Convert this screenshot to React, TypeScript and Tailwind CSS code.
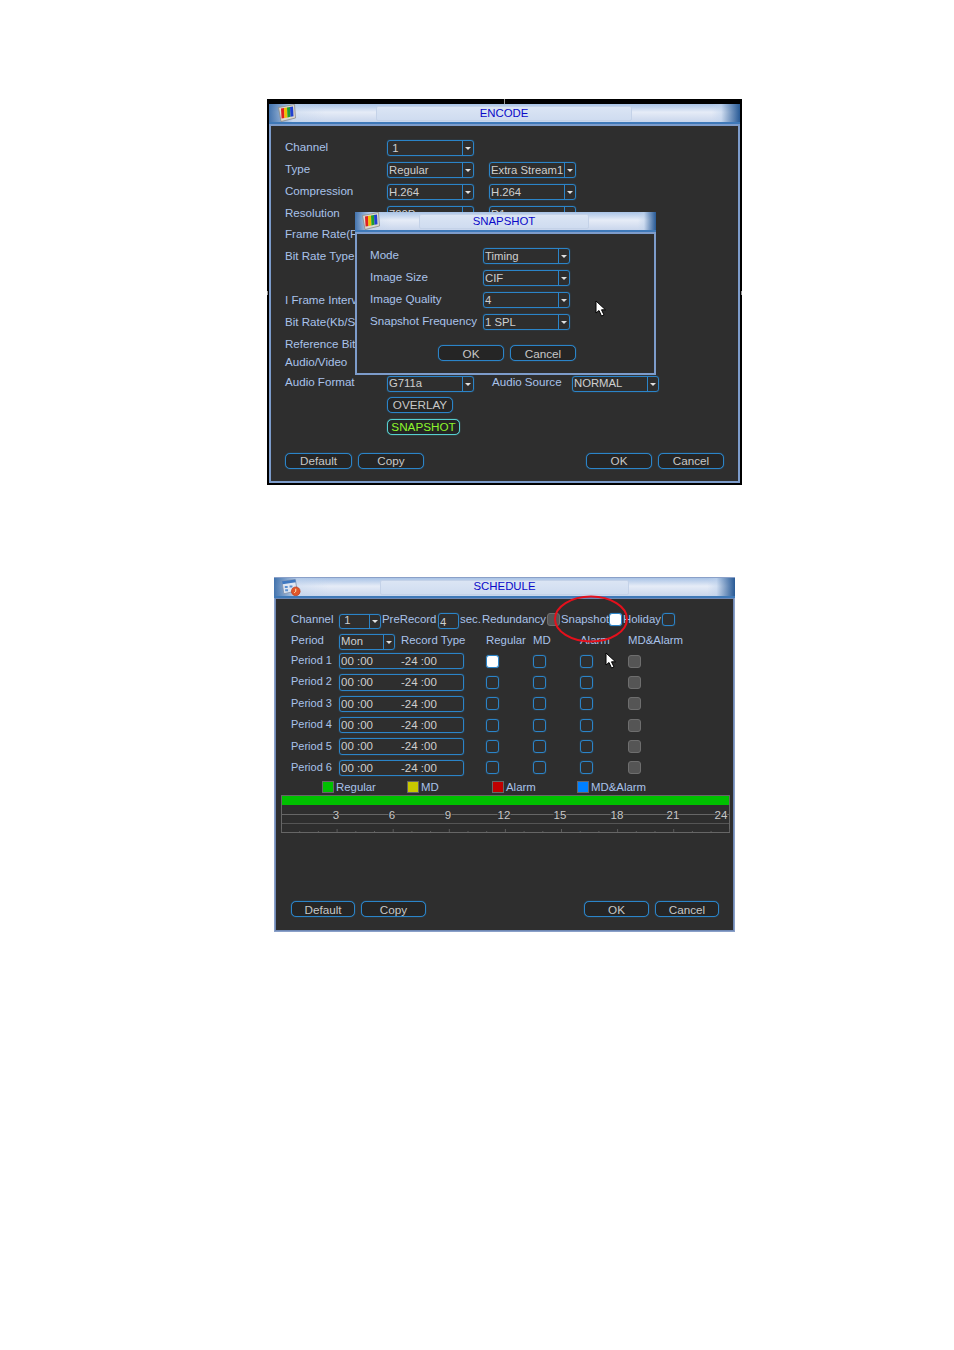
import React from "react";

const labelC = "text-[#a9c2ea] whitespace-nowrap leading-none";
const line = "border-[#2b84c8] shadow-[0_0_1px_#2b84c8]";

function Select({ value, w = "w-[87px]", pt = "pt-[1px]", h = "h-[16px]" }: { value: string; w?: string; pt?: string; h?: string }) {
  return (
    <div className={`${w} ${h} shrink-0 flex border rounded-[3px] ${line} text-[#cfcfcf] text-[11.3px] leading-none overflow-hidden`}>
      <div className={`flex-1 pl-[1px] ${pt} flex items-center whitespace-pre overflow-hidden`}>{value}</div>
      <div className="w-[11px] border-l border-[#2b84c8] flex items-center justify-center">
        <div className="w-0 h-0 border-l-[3px] border-r-[3px] border-t-[3px] border-l-transparent border-r-transparent border-t-[#e0e0e0]" />
      </div>
    </div>
  );
}

function Btn({ text, w = "w-[66px]", green = false, pt = "pt-[1px]" }: { text: string; w?: string; green?: boolean; pt?: string }) {
  return (
    <div className={`${w} h-[16px] shrink-0 rounded-[5px] border ${green ? "border-[#58cfd0] shadow-[0_0_1px_#58cfd0] text-[#8cf52c]" : `${line} text-[#c8c8c8]`} bg-[#252525] flex items-center justify-center ${pt} text-[11.7px] leading-none`}>
      {text}
    </div>
  );
}

function Row({ label, children, h = "h-[22px]", labelW = "w-[102px]", pb = "pb-[3px]" }: { label: string; children?: React.ReactNode; h?: string; labelW?: string; pb?: string }) {
  return (
    <div className={`flex items-center ${h}`}>
      <div className={`${labelW} ${pb} shrink-0 text-[11.6px] ${labelC}`}>{label}</div>
      {children}
    </div>
  );
}

function TvIcon() {
  return (
    <svg width="18" height="18" viewBox="0 0 18 18" className="shrink-0">
      <path d="M0.5 3.5 L16.5 0.5 L17.5 14 L3 17.5 Z" fill="#dcd8d0" stroke="#8a8a86" strokeWidth="0.8" />
      <path d="M3 4.5 L6 4 L6.5 14 L3.6 14.6 Z" fill="#e02020" />
      <path d="M6 4 L9 3.5 L9.5 13.4 L6.5 14 Z" fill="#f0c000" />
      <path d="M9 3.5 L12 3 L12.5 12.8 L9.5 13.4 Z" fill="#20a030" />
      <path d="M12 3 L15 2.5 L15.5 12.2 L12.5 12.8 Z" fill="#2040d0" />
    </svg>
  );
}

function CalIcon() {
  return (
    <svg width="20" height="19" viewBox="0 0 21 19" className="shrink-0">
      <path d="M1 3 L15 1 L17 13 L3 16 Z" fill="#dfe6f2" stroke="#7f8fa8" strokeWidth="0.8" />
      <path d="M1 3 L15 1 L15.6 4 L1.6 6 Z" fill="#3f78c0" />
      <path d="M4 8 h3 v2 h-3 Z M9 7.4 h3 v2 h-3 Z M4.4 11.4 h3 v2 h-3 Z" fill="#5a8fd0" />
      <circle cx="15.5" cy="13.5" r="4.6" fill="#e0562a" stroke="#b03010" strokeWidth="0.6" />
      <path d="M15.5 10.8 V13.6 L13.9 15" fill="none" stroke="#fff3c0" strokeWidth="1" />
    </svg>
  );
}

function TitleBar({ title, icon, innerL, innerW, pl, pt = "" }: { title: string; icon: React.ReactNode; innerL: string; innerW: string; pl: string; pt?: string }) {
  return (
    <div className={`h-[18px] ${pl} shrink-0 flex items-center bg-[linear-gradient(to_right,rgba(60,110,170,0.95),rgba(190,210,236,0.4)_5%,rgba(255,255,255,0)_12%,rgba(255,255,255,0)_94%,rgba(190,210,236,0.5)_96%,rgba(40,90,150,1)),linear-gradient(to_bottom,#a9c3e6,#e6ecf7_45%,#c9d6ec)]`}>
      {icon}
      <div className={`${innerL} ${innerW} ${pt} h-[15px] rounded-[2px] border border-[#c4d2e8] bg-[linear-gradient(to_bottom,#dbe5f4,#cfdcf0)] flex items-center justify-center text-[11.4px] leading-none text-[#0a0ac8]`}>
        {title}
      </div>
    </div>
  );
}

function Cursor({ className }: { className: string }) {
  return (
    <svg width="13" height="17" viewBox="0 0 13 17" className={className}>
      <path d="M1 1 V13 L4 10.5 L6.5 16 L9 15 L6.5 9.8 L10.5 9.8 Z" fill="#fff" stroke="#000" strokeWidth="1" />
    </svg>
  );
}

function Check({ kind = "blue", up = "" }: { kind?: "blue" | "gray" | "white"; up?: string }) {
  const c =
    kind === "white"
      ? `bg-white ${line}`
      : kind === "gray"
        ? "bg-[#555555] border-[#6e6e6e]"
        : line;
  return <div className={`w-[13px] h-[13px] shrink-0 rounded-[3px] border ${up} ${c}`} />;
}

function Encode() {
  return (
    <div className="relative w-[475px] h-[386px] bg-black pt-[5px] px-[2px] pb-[2px] flex flex-col">
      <div className="absolute left-[237px] top-0 w-[1px] h-[5px] bg-[#999999]" />
      <div className="absolute left-0 top-[192px] w-[1px] h-[4px] bg-[#999999]" />
      <div className="absolute right-0 top-[192px] w-[1px] h-[4px] bg-[#999999]" />
      <TitleBar title="ENCODE" icon={<TvIcon />} pl="pl-[9px]" innerL="ml-[80px]" innerW="w-[256px]" pt="pt-[2px]" />
      <div className="h-[2px] shrink-0 bg-[#3f79b8]" />
      <div className="flex-1 border-2 border-[#7d9ccb] bg-[#2e2e2e] pl-[14px] pr-[14px] pt-[11px]">
        <Row label="Channel"><Select value=" 1" /></Row>
        <Row label="Type">
          <Select value="Regular" />
          <div className="w-[15px]" />
          <Select value="Extra Stream1" />
        </Row>
        <Row label="Compression">
          <Select value="H.264" />
          <div className="w-[15px]" />
          <Select value="H.264" />
        </Row>
        <Row label="Resolution">
          <Select value="720P" />
          <div className="w-[15px]" />
          <Select value="D1" />
        </Row>
        <Row label="Frame Rate(FPS)" pb="pb-[5px]" />
        <Row label="Bit Rate Type" pb="pb-[5px]" />
        <Row label="" />
        <Row label="I Frame Interval" pb="pb-[5px]" />
        <Row label="Bit Rate(Kb/S)" pb="pb-[5px]" />
        <Row label="Reference Bit Rate" pb="pb-[5px]" />
        <Row label="Audio/Video" h="h-[16px]" pb="pb-[7px]" />
        <Row label="Audio Format" pb="pb-[5px]">
          <Select value="G711a" pt="" />
          <div className="w-[18px] shrink-0" />
          <div className={`w-[80px] shrink-0 pb-[5px] text-[11.6px] ${labelC}`}>Audio Source</div>
          <Select value="NORMAL" pt="" />
        </Row>
        <Row label="" h="h-[20px]"><Btn text="OVERLAY" pt="" /></Row>
        <Row label="" h="h-[24px]"><Btn text="SNAPSHOT" w="w-[73px]" green pt="" /></Row>
        <div className="flex mt-[14px]">
          <Btn text="Default" w="w-[67px]" pt="" />
          <div className="w-[6px]" />
          <Btn text="Copy" pt="" />
          <div className="flex-1" />
          <Btn text="OK" pt="" />
          <div className="w-[6px]" />
          <Btn text="Cancel" pt="" />
        </div>
      </div>

      <div className="absolute left-[88px] top-[113px] w-[301px] h-[163px] flex flex-col">
        <TitleBar title="SNAPSHOT" icon={<TvIcon />} pl="pl-[7px]" innerL="ml-[39px]" innerW="w-[170px]" pt="pt-[2px]" />
        <div className="h-[2px] shrink-0 bg-[#3f79b8]" />
        <div className="flex-1 border-2 border-[#7d9ccb] bg-[#2e2e2e] pl-[13px] pt-[11px]">
          <Row label="Mode" labelW="w-[113px]"><Select value="Timing" /></Row>
          <Row label="Image Size" labelW="w-[113px]"><Select value="CIF" /></Row>
          <Row label="Image Quality" labelW="w-[113px]"><Select value="4" /></Row>
          <Row label="Snapshot Frequency" labelW="w-[113px]"><Select value="1 SPL" /></Row>
          <div className="flex ml-[68px] mt-[12px]">
            <Btn text="OK" />
            <div className="w-[6px]" />
            <Btn text="Cancel" />
          </div>
        </div>
      </div>
      <Cursor className="absolute left-[328px] top-[201px]" />
    </div>
  );
}

function Period({ n, first }: { n: number; first?: boolean }) {
  return (
    <div className="flex items-center h-[16px] pl-[10px] mb-[5.4px]">
      <div className={`w-[48px] shrink-0 pb-[1px] text-[11px] ${labelC}`}>Period {n}</div>
      <div className={`w-[125px] h-[16.5px] shrink-0 flex items-center pt-[1px] border rounded-[3px] ${line} text-[#cfcfcf] text-[11.5px] leading-none whitespace-pre`}>
        <div className="w-[61px] pl-[1px]">00 :00</div>
        <div>-24 :00</div>
      </div>
      <div className="w-[22px] shrink-0" />
      <Check kind={first ? "white" : "blue"} />
      <div className="w-[34px] shrink-0" />
      <Check />
      <div className="w-[34px] shrink-0" />
      <Check />
      <div className="w-[35px] shrink-0" />
      <Check kind="gray" />
    </div>
  );
}

function Legend({ color, text }: { color: string; text: string }) {
  return (
    <div className="w-[85px] shrink-0 flex items-center">
      <div className={`w-[12px] h-[12px] border border-[#666666] ${color}`} />
      <div className={`ml-[2px] text-[11.4px] ${labelC}`}>{text}</div>
    </div>
  );
}

function Timeline() {
  const labels = [3, 6, 9, 12, 15, 18, 21, 24];
  const xs = [55, 111, 167, 223, 279, 336, 392, 440];
  const minors = Array.from({ length: 25 }, (_, i) => i * 18.7);
  return (
    <svg width="449" height="38" viewBox="0 0 449 38" className="mt-[2px] block">
      <rect x="0.5" y="0.5" width="448" height="37" fill="none" stroke="#666666" />
      <rect x="1" y="1" width="447" height="9" fill="#00c000" />
      <line x1="1" y1="19.5" x2="448" y2="19.5" stroke="#666666" />
      <line x1="1" y1="28.5" x2="448" y2="28.5" stroke="#555555" />
      {minors.map((x, i) => (
        <line key={i} x1={x} x2={x} y1={i % 3 === 0 ? 34 : 36} y2="37" stroke="#5c5c5c" />
      ))}
      {labels.map((l, i) => (
        <text key={l} x={xs[i]} y="24" textAnchor="middle" fontSize="11.5" fill="#c8c8c8" stroke="#2e2e2e" strokeWidth="2" paintOrder="stroke" fontFamily="Liberation Sans">
          {l}
        </text>
      ))}
    </svg>
  );
}

function Schedule() {
  return (
    <div className="relative w-[461px] h-[355px] mt-[92px] ml-[7px] bg-[#8aa0c8] pt-[1px] flex flex-col">
      <TitleBar title="SCHEDULE" icon={<CalIcon />} pl="pl-[7px]" innerL="ml-[79px]" innerW="w-[249px]" />
      <div className="h-[2px] shrink-0 bg-[#3f79b8]" />
      <div className="flex-1 mx-[1px] mb-[1px] border border-[#6f88b4] bg-[#2e2e2e] pl-[5px] pt-[14px]">
        <div className="flex items-center h-[16px] pl-[10px] text-[11.4px]">
          <div className={`w-[48px] shrink-0 pb-[2px] ${labelC}`}>Channel</div>
          <Select value=" 1" w="w-[42px]" h="h-[15px]" pt="" />
          <div className={`ml-[1px] w-[56px] shrink-0 pb-[2px] ${labelC}`}>PreRecord</div>
          <div className={`w-[21px] h-[16px] shrink-0 border rounded-[3px] ${line} text-[#cfcfcf] text-[11.3px] leading-none pl-[1px] pt-[3px]`}>4</div>
          <div className={`ml-[1px] w-[22px] shrink-0 pb-[2px] ${labelC}`}>sec.</div>
          <div className={`w-[65px] shrink-0 pb-[2px] ${labelC}`}>Redundancy</div>
          <Check kind="gray" up="-mt-[3px]" />
          <div className={`ml-[1px] w-[48px] shrink-0 pb-[2px] ${labelC}`}>Snapshot</div>
          <Check kind="white" up="-mt-[3px]" />
          <div className={`ml-[1px] w-[39px] shrink-0 pb-[2px] ${labelC}`}>Holiday</div>
          <Check up="-mt-[3px]" />
        </div>
        <div className="flex items-center h-[16px] pl-[10px] mt-[5px] text-[11.4px]">
          <div className={`w-[48px] shrink-0 pb-[2px] ${labelC}`}>Period</div>
          <Select value="Mon" w="w-[56px]" pt="" />
          <div className={`ml-[6px] w-[85px] shrink-0 pb-[2px] ${labelC}`}>Record Type</div>
          <div className={`w-[47px] shrink-0 pb-[2px] ${labelC}`}>Regular</div>
          <div className={`w-[47px] shrink-0 pb-[2px] ${labelC}`}>MD</div>
          <div className={`w-[48px] shrink-0 pb-[2px] ${labelC}`}>Alarm</div>
          <div className={`pb-[2px] ${labelC}`}>MD&amp;Alarm</div>
        </div>
        <div className="mt-[3px]">
          {[1, 2, 3, 4, 5, 6].map((n) => (
            <Period key={n} n={n} first={n === 1} />
          ))}
        </div>
        <div className="flex h-[12px] ml-[41px] mt-[1px]">
          <Legend color="bg-[#00c000]" text="Regular" />
          <Legend color="bg-[#c8c800]" text="MD" />
          <Legend color="bg-[#c00000]" text="Alarm" />
          <Legend color="bg-[#0080ff]" text="MD&Alarm" />
        </div>
        <Timeline />
        <div className="flex mt-[68px] pl-[10px] pr-[14px]">
          <Btn text="Default" w="w-[64px]" />
          <div className="w-[6px]" />
          <Btn text="Copy" w="w-[65px]" />
          <div className="flex-1" />
          <Btn text="OK" w="w-[65px]" />
          <div className="w-[6px]" />
          <Btn text="Cancel" w="w-[64px]" />
        </div>
      </div>
      <svg width="76" height="50" viewBox="0 0 76 50" className="absolute left-[279px] top-[17px]">
        <ellipse cx="38" cy="25" rx="36" ry="22.5" fill="none" stroke="#e4101c" strokeWidth="2" />
      </svg>
      <Cursor className="absolute left-[331px] top-[75px]" />
    </div>
  );
}

export default function App() {
  return (
    <div className="min-h-[1350px] w-[954px] bg-white pt-[99px] pl-[267px] flex flex-col items-start font-['Liberation_Sans',sans-serif]">
      <Encode />
      <Schedule />
    </div>
  );
}
